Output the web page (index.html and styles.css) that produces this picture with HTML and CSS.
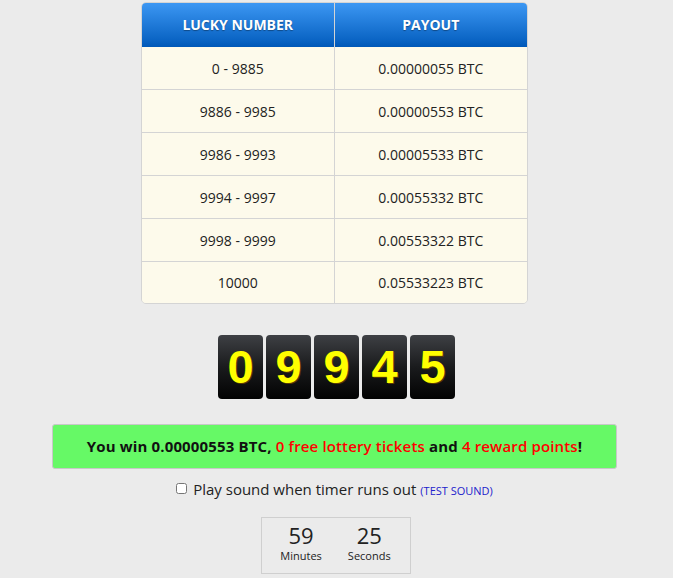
FILE: index.html
```html
<!DOCTYPE html>
<html lang="en">
<head>
  <meta charset="UTF-8" />
  <title>Free BTC</title>
  <link rel="stylesheet" href="styles.css">
</head>
<body>
  <div class="page">

    <table class="payout-table">
      <thead>
        <tr>
          <th>Lucky Number</th>
          <th>Payout</th>
        </tr>
      </thead>
      <tbody>
        <tr><td>0 - 9885</td><td>0.00000055 BTC</td></tr>
        <tr><td>9886 - 9985</td><td>0.00000553 BTC</td></tr>
        <tr><td>9986 - 9993</td><td>0.00005533 BTC</td></tr>
        <tr><td>9994 - 9997</td><td>0.00055332 BTC</td></tr>
        <tr><td>9998 - 9999</td><td>0.00553322 BTC</td></tr>
        <tr><td>10000</td><td>0.05533223 BTC</td></tr>
      </tbody>
    </table>

    <div class="digits">
      <span class="digit">0</span>
      <span class="digit">9</span>
      <span class="digit">9</span>
      <span class="digit">4</span>
      <span class="digit">5</span>
    </div>

    <div class="win-box">
      You win 0.00000553 BTC, <span class="red">0 free lottery tickets</span> and <span class="red">4 reward points</span>!
    </div>

    <label class="sound">
      <input type="checkbox" /> Play sound when timer runs out <a href="#" class="test-sound">(TEST SOUND)</a>
    </label>

    <div class="countdown">
      <div class="count-part">
        <div class="count-num">59</div>
        <div class="count-label">Minutes</div>
      </div>
      <div class="count-part">
        <div class="count-num">25</div>
        <div class="count-label">Seconds</div>
      </div>
    </div>

  </div>
</body>
</html>
```

FILE: styles.css
```css
* {
  box-sizing: border-box;
}
html, body {
  margin: 0;
  padding: 0;
  background: #ebebeb;
  font-family: 'Open Sans', sans-serif;
  color: #222;
}

.page {
  width: 669px;
  padding-top: 2px;
  display: flex;
  flex-direction: column;
  align-items: center;
}

.payout-table {
  width: 387px;
  table-layout: fixed;
  border-collapse: separate;
  border-spacing: 0;
  border: 1px solid #d4d4d4;
  border-radius: 5px;
  overflow: hidden;
  font-size: 14px;
}
.payout-table th {
  width: 50%;
  height: 44px;
  color: white;
  font-size: 14px;
  font-weight: 700;
  text-transform: uppercase;
  text-shadow: 0 1px 1px rgba(0,0,0,0.35);
  background: linear-gradient(#3c97f3, #0a64c4 85%, #0058b8);
  border-right: 1px solid #d4d4d4;
  padding: 0 0 2px;
}
.payout-table td {
  height: 43px;
  background: #fdfaeb;
  text-align: center;
  border-top: 1px solid #d4d4d4;
  border-right: 1px solid #d4d4d4;
  padding: 0;
}
.payout-table tbody tr:first-child td {
  border-top: none;
  height: 42px;
}
.payout-table tbody tr:last-child td {
  height: 42px;
}
.payout-table th:last-child,
.payout-table td:last-child {
  border-right: none;
}

.digits {
  display: flex;
  gap: 3px;
  margin-top: 31px;
  margin-left: 4px;
}
.digit {
  width: 45px;
  height: 64px;
  border-radius: 4px;
  background: linear-gradient(#3e4044, #1a1b1d 50%, #020202);
  color: #ffff00;
  font-family: 'Liberation Sans', Arial, sans-serif;
  font-weight: 700;
  font-size: 47px;
  line-height: 64px;
  text-align: center;
  text-shadow: 1px 1px 0 #5a3a00;
}

.win-box {
  width: 565px;
  height: 45px;
  margin-top: 25px;
  background: #66f966;
  border: 1px solid #c8c8c8;
  border-radius: 3px;
  text-align: center;
  line-height: 43px;
  font-size: 15px;
  letter-spacing: 0.15px;
  font-weight: 700;
  color: #111;
}
.win-box .red {
  color: #ff0000;
  font-weight: 600;
}

.sound {
  margin-top: 10px;
  font-size: 15px;
  color: #222;
  display: flex;
  align-items: center;
}
.sound input {
  width: 11px;
  height: 11px;
  margin: 0 6px 2px 0;
}
.test-sound {
  font-size: 11px;
  color: #2222cc;
  text-decoration: none;
  margin-left: 4px;
  margin-top: 2px;
}

.countdown {
  margin-top: 18px;
  width: 150px;
  height: 57px;
  border: 1px solid #cfcfcf;
  display: flex;
  justify-content: center;
  gap: 26px;
  padding-top: 4px;
  margin-left: 2px;
}
.count-part {
  text-align: center;
}
.count-num {
  font-size: 22px;
  line-height: 27px;
}
.count-label {
  font-size: 11px;
  line-height: 14px;
}
```
